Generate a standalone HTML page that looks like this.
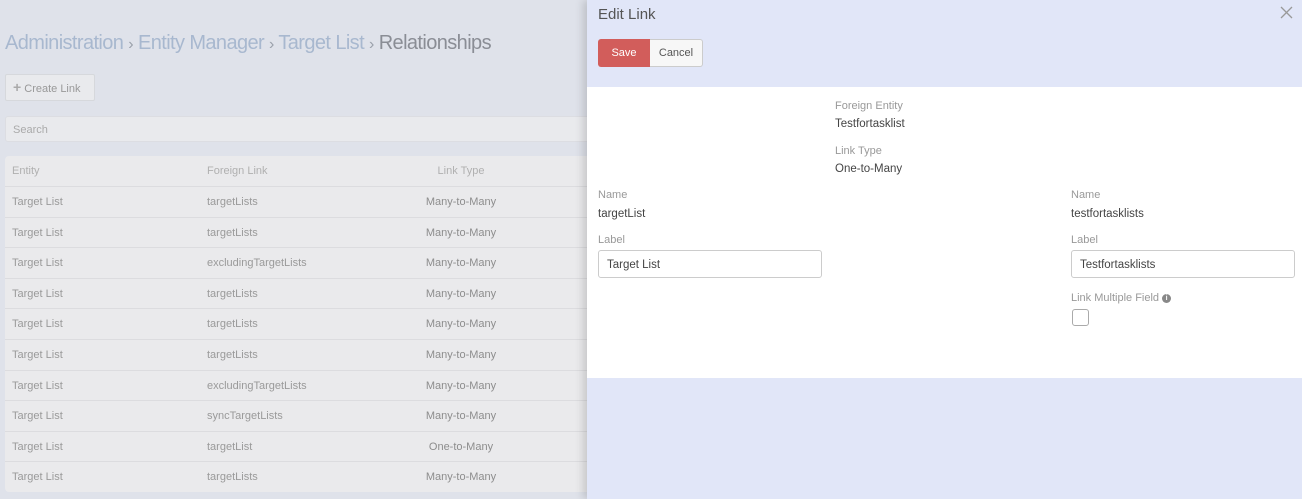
<!DOCTYPE html>
<html><head><style>
*{box-sizing:border-box;margin:0;padding:0}
body{width:1302px;height:499px;overflow:hidden;background:#dfe2ea;font-family:"Liberation Sans",sans-serif;position:relative;font-size:12px}
.bc{position:absolute;left:5px;top:32px;font-size:20px;color:#a8b8cf;letter-spacing:-0.6px}
.bc span.g{color:#8a8d95}
.bc span.s{color:#9aa0aa;font-size:16px}
.cl{position:absolute;left:5px;top:74px;width:90px;height:27px;border:1px solid #d6d8dc;background:#e9eaed;border-radius:2px;color:#999;font-size:11px;line-height:25px;padding-left:7px}
.search{position:absolute;left:5px;top:116px;width:600px;height:26px;background:#e9eaed;border:1px solid #dcdde2;border-radius:3px;color:#aaa;font-size:11px;line-height:26px;padding-left:7px}
.tbl{position:absolute;left:5px;top:156px;width:600px;height:336px;background:#eaeaec;border-radius:4px}
.row{position:absolute;left:0;width:600px;height:30.6px;border-top:1px solid #dcdcdf;font-size:11px;color:#9a9a9a;line-height:30px}
.row div{position:absolute}
.row .a{left:7px}.row .b{left:202px}.row .c{left:380px;width:152px;text-align:center;color:#8d8d8d}
.hd{color:#b0b0b0;border-top:none}
.panel{position:absolute;left:587px;top:0;width:715px;height:499px;background:#e1e6f8;box-shadow:-4px 0 8px rgba(0,0,0,.15)}
.title{position:absolute;left:11px;top:6px;font-size:15px;color:#555}
.x{position:absolute;right:9px;top:6px}
.btns{position:absolute;left:11px;top:39px;height:28px;display:flex}
.save{background:#d25d5b;color:#fff;width:52px;border-radius:3px 0 0 3px;font-size:11px;line-height:28px;text-align:center}
.cancel{background:#f7f7f7;border:1px solid #ccc;border-left:none;width:53px;border-radius:0 3px 3px 0;font-size:11px;color:#555;line-height:26px;text-align:center}
.body{position:absolute;left:0;top:87px;width:715px;height:291px;background:#fff}
.lbl{position:absolute;font-size:11px;color:#999}
.val{position:absolute;font-size:11.5px;color:#444}
.inp{position:absolute;width:224px;height:28px;border:1px solid #ccc;border-radius:3px;font-size:11.5px;color:#444;line-height:28px;padding-left:8px}
.cb{position:absolute;left:485px;top:222px;width:17px;height:17px;border:1px solid #aaa;border-radius:3px}
.info{display:inline-block;width:9px;height:9px;border-radius:50%;background:#888;color:#fff;font-size:7px;line-height:9px;text-align:center;font-weight:bold;vertical-align:1px}
</style></head><body>
<div class="bc">Administration <span class="s">›</span> Entity Manager <span class="s">›</span> Target List <span class="s">›</span> <span class="g">Relationships</span></div>
<div class="cl"><b style="font-size:14px;color:#aaa">+</b> Create Link</div>
<div class="search">Search</div>
<div class="tbl">
<div class="row hd" style="top:0"><div class="a">Entity</div><div class="b">Foreign Link</div><div class="c" style="color:#b0b0b0">Link Type</div></div>
<div class="row" style="top:30px"><div class="a">Target List</div><div class="b">targetLists</div><div class="c">Many-to-Many</div></div>
<div class="row" style="top:60.6px"><div class="a">Target List</div><div class="b">targetLists</div><div class="c">Many-to-Many</div></div>
<div class="row" style="top:91.2px"><div class="a">Target List</div><div class="b">excludingTargetLists</div><div class="c">Many-to-Many</div></div>
<div class="row" style="top:121.8px"><div class="a">Target List</div><div class="b">targetLists</div><div class="c">Many-to-Many</div></div>
<div class="row" style="top:152.4px"><div class="a">Target List</div><div class="b">targetLists</div><div class="c">Many-to-Many</div></div>
<div class="row" style="top:183px"><div class="a">Target List</div><div class="b">targetLists</div><div class="c">Many-to-Many</div></div>
<div class="row" style="top:213.6px"><div class="a">Target List</div><div class="b">excludingTargetLists</div><div class="c">Many-to-Many</div></div>
<div class="row" style="top:244.2px"><div class="a">Target List</div><div class="b">syncTargetLists</div><div class="c">Many-to-Many</div></div>
<div class="row" style="top:274.8px"><div class="a">Target List</div><div class="b">targetList</div><div class="c">One-to-Many</div></div>
<div class="row" style="top:305.4px"><div class="a">Target List</div><div class="b">targetLists</div><div class="c">Many-to-Many</div></div>
</div>
<div class="panel">
<div class="title">Edit Link</div>
<svg class="x" width="13" height="13" viewBox="0 0 13 13"><path d="M1 1L12 12M12 1L1 12" stroke="#999" stroke-width="1.3"/></svg>
<div class="btns"><div class="save">Save</div><div class="cancel">Cancel</div></div>
<div class="body">
<div class="lbl" style="left:248px;top:13px">Foreign Entity</div>
<div class="val" style="left:248px;top:31px">Testfortasklist</div>
<div class="lbl" style="left:248px;top:58px">Link Type</div>
<div class="val" style="left:248px;top:76px">One-to-Many</div>
<div class="lbl" style="left:11px;top:102px">Name</div>
<div class="val" style="left:11px;top:121px">targetList</div>
<div class="lbl" style="left:484px;top:102px">Name</div>
<div class="val" style="left:484px;top:121px">testfortasklists</div>
<div class="lbl" style="left:11px;top:147px">Label</div>
<div class="inp" style="left:11px;top:163px">Target List</div>
<div class="lbl" style="left:484px;top:147px">Label</div>
<div class="inp" style="left:484px;top:163px">Testfortasklists</div>
<div class="lbl" style="left:484px;top:205px">Link Multiple Field <span class="info">i</span></div>
<div class="cb"></div>
</div>
</div>
</body></html>
